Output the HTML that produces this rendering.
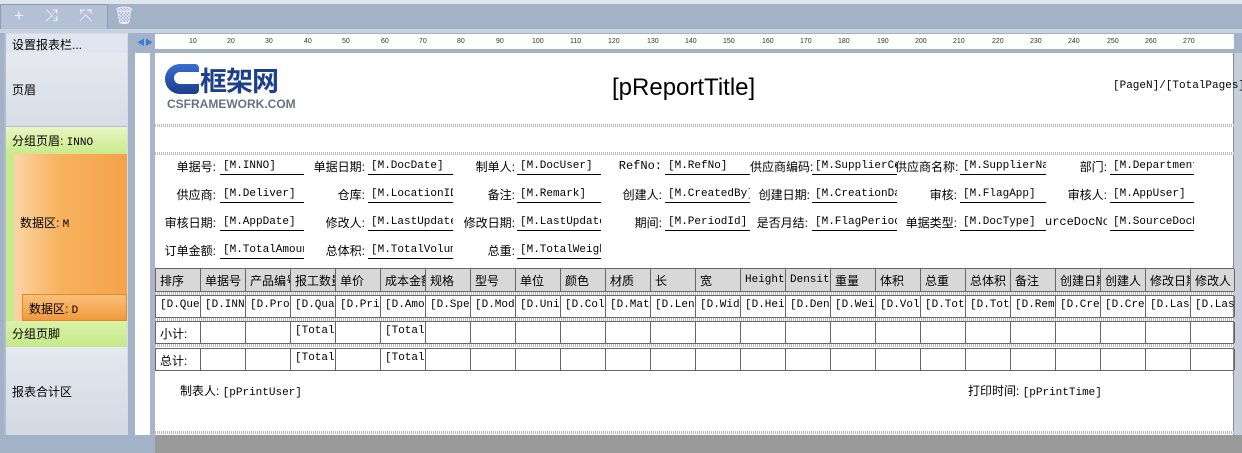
<!DOCTYPE html>
<html><head><meta charset="utf-8"><style>
*{margin:0;padding:0;box-sizing:border-box}
body{width:1242px;height:453px;overflow:hidden;background:#a4b2c8;font-family:"Liberation Sans","Noto Sans CJK SC",sans-serif;font-size:12px;color:#000;position:relative}
.a{position:absolute}
.m{font-family:"Liberation Mono","Noto Sans CJK SC",monospace;font-size:11px}
.lbl{position:absolute;text-align:right;white-space:nowrap;font-size:12px}
.fld{position:absolute;height:20px;border-bottom:1px solid #000;white-space:nowrap;overflow:hidden;font-family:"Liberation Mono","Noto Sans CJK SC",monospace;font-size:11px;padding:5px 0 0 3px}
.cell{position:absolute;border-right:1px solid #666;height:100%;top:0;white-space:nowrap;overflow:hidden;padding:3px 0 0 4px}
.dot{position:absolute;left:155px;width:1079px;height:3px;background:repeating-linear-gradient(90deg,#bbb 0 1px,#fff 1px 2px)}
.lp{position:absolute;left:6px;width:121px;padding-left:6px;font-size:12px}
</style></head><body>
<div class="a" style="left:0;top:0;width:1242px;height:4px;background:#dfe5ee"></div>
<div class="a" style="left:0;top:4px;width:108px;height:25px;background:#b4c0d3;border:1px solid #8e9cb4;border-bottom:none"></div>
<div class="a" style="left:0;top:29px;width:1242px;height:4px;background:#c7d1df"></div>
<div class="a" style="left:14px;top:6px;color:#eef;font-size:17px;letter-spacing:8px">+ ⤨ ⤧ 🗑</div>
<div class="a" style="left:4px;top:33px;width:124px;height:402px;background:#d4dce8;border-left:2px solid #b0bccc"></div>
<div class="lp" style="top:34px;height:19px;background:#dfe6ef;padding-top:2px">设置报表栏...</div>
<div class="lp" style="top:53px;height:74px;background:linear-gradient(#e6e9ef,#d7dce6);border-bottom:1px solid #b6bfcc;padding-top:28px">页眉</div>
<div class="lp" style="top:127px;height:27px;background:linear-gradient(#e8f7c4,#c9ea8a);padding-top:5px">分组页眉: <span class="m">INNO</span></div>
<div class="a" style="left:6px;top:154px;width:121px;height:167px;background:#c9ea8a"></div>
<div class="a" style="left:14px;top:154px;width:113px;height:167px;background:linear-gradient(90deg,#fbd5a6,#f7b25e 40%,#f4a24a);padding:60px 0 0 6px">数据区: <span class="m">M</span></div>
<div class="a" style="left:22px;top:294px;width:105px;height:27px;background:linear-gradient(#f9c07a,#f29a3c);border:1px solid #e08a30;padding:5px 0 0 6px">数据区: <span class="m">D</span></div>
<div class="lp" style="top:321px;height:26px;background:linear-gradient(#d9f2a9,#c7e889);padding-top:4px">分组页脚</div>
<div class="lp" style="top:347px;height:87px;background:linear-gradient(#e4e8ef,#d3d9e3);padding-top:36px">报表合计区</div>
<div class="a" style="left:155px;top:34px;width:1079px;height:15px;background:#fff"></div>
<div class="a" style="left:137px;top:37px;color:#3a7bd5;font-size:8px">◀▶</div>
<div class="a" style="left:135px;top:53px;width:18px;height:382px;background:#fff"></div>
<div class="a" style="left:150px;top:53px;width:5px;height:382px;background:#aab6c8"></div>
<div class="a" style="left:155px;top:53px;width:1079px;height:382px;background:#fff;border-right:1px solid #888"></div>
<div class="a" style="left:155px;top:435px;width:1087px;height:18px;background:#9a9a9a"></div>
<div class="a" style="left:1234px;top:53px;width:8px;height:382px;background:#c5cedb"></div>
<div class="dot" style="top:124px"></div>
<div class="dot" style="top:152px"></div>
<div class="dot" style="top:292px"></div>
<div class="dot" style="top:318px"></div>
<div class="dot" style="top:344px"></div>
<div class="dot" style="top:431px"></div>
<div class="a" style="left:165px;top:64px;width:34px;height:30px;border-radius:15px 4px 4px 15px;background:linear-gradient(#3a6fd0,#1c3d8c)"></div>
<div class="a" style="left:174px;top:72px;width:26px;height:12px;background:#fff;border-radius:6px 0 0 6px"></div>
<div class="a" style="left:200px;top:60px;font-size:27px;font-weight:bold;color:#1e3f8e;font-family:'Noto Sans CJK SC',sans-serif;letter-spacing:-1px">框架网</div>
<div class="a" style="left:167px;top:97px;font-size:12px;color:#6a7180;font-weight:bold">CSFRAMEWORK.COM</div>
<div class="a" style="left:612px;top:74px;font-size:24px">[pReportTitle]</div>
<div class="a m" style="left:1113px;top:80px">[PageN]/[TotalPages]</div>
<div class="lbl" style="left:160px;width:56px;top:158px">单据号:</div><div class="fld" style="left:220px;width:84px;top:155px">[M.INNO]</div>
<div class="lbl" style="left:305px;width:60px;top:158px">单据日期:</div><div class="fld" style="left:368px;width:85px;top:155px">[M.DocDate]</div>
<div class="lbl" style="left:455px;width:60px;top:158px">制单人:</div><div class="fld" style="left:517px;width:84px;top:155px">[M.DocUser]</div>
<div class="lbl m" style="left:600px;width:62px;top:159px">RefNo:</div><div class="fld" style="left:665px;width:85px;top:155px">[M.RefNo]</div>
<div class="lbl" style="left:750px;width:58px;top:158px">供应商编码:</div><div class="fld" style="left:812px;width:85px;top:155px">[M.SupplierCo</div>
<div class="lbl" style="left:895px;width:62px;top:158px">供应商名称:</div><div class="fld" style="left:960px;width:86px;top:155px">[M.SupplierNa</div>
<div class="lbl" style="left:1045px;width:62px;top:158px">部门:</div><div class="fld" style="left:1110px;width:84px;top:155px">[M.Department</div>
<div class="lbl" style="left:160px;width:56px;top:186px">供应商:</div><div class="fld" style="left:220px;width:84px;top:183px">[M.Deliver]</div>
<div class="lbl" style="left:305px;width:60px;top:186px">仓库:</div><div class="fld" style="left:368px;width:85px;top:183px">[M.LocationID</div>
<div class="lbl" style="left:455px;width:60px;top:186px">备注:</div><div class="fld" style="left:517px;width:84px;top:183px">[M.Remark]</div>
<div class="lbl" style="left:600px;width:62px;top:186px">创建人:</div><div class="fld" style="left:665px;width:85px;top:183px">[M.CreatedBy]</div>
<div class="lbl" style="left:750px;width:60px;top:186px">创建日期:</div><div class="fld" style="left:812px;width:85px;top:183px">[M.CreationDa</div>
<div class="lbl" style="left:895px;width:62px;top:186px">审核:</div><div class="fld" style="left:960px;width:86px;top:183px">[M.FlagApp]</div>
<div class="lbl" style="left:1045px;width:62px;top:186px">审核人:</div><div class="fld" style="left:1110px;width:84px;top:183px">[M.AppUser]</div>
<div class="lbl" style="left:160px;width:56px;top:214px">审核日期:</div><div class="fld" style="left:220px;width:84px;top:211px">[M.AppDate]</div>
<div class="lbl" style="left:305px;width:60px;top:214px">修改人:</div><div class="fld" style="left:368px;width:85px;top:211px">[M.LastUpdate</div>
<div class="lbl" style="left:455px;width:60px;top:214px">修改日期:</div><div class="fld" style="left:517px;width:84px;top:211px">[M.LastUpdate</div>
<div class="lbl" style="left:600px;width:62px;top:214px">期间:</div><div class="fld" style="left:665px;width:85px;top:211px">[M.PeriodId]</div>
<div class="lbl" style="left:750px;width:58px;top:214px">是否月结:</div><div class="fld" style="left:812px;width:85px;top:211px">[M.FlagPeriod</div>
<div class="lbl" style="left:895px;width:62px;top:214px">单据类型:</div><div class="fld" style="left:960px;width:86px;top:211px">[M.DocType]</div>
<div class="lbl m" style="left:1045px;width:62px;top:215px;overflow:hidden">urceDocNo:</div><div class="fld" style="left:1110px;width:84px;top:211px">[M.SourceDocN</div>
<div class="lbl" style="left:160px;width:56px;top:242px">订单金额:</div><div class="fld" style="left:220px;width:84px;top:239px">[M.TotalAmoun</div>
<div class="lbl" style="left:305px;width:60px;top:242px">总体积:</div><div class="fld" style="left:368px;width:85px;top:239px">[M.TotalVolum</div>
<div class="lbl" style="left:455px;width:60px;top:242px">总重:</div><div class="fld" style="left:517px;width:84px;top:239px">[M.TotalWeigh</div>
<div class="a" style="left:155px;top:268px;width:1079px;height:24px;background:#d8d8d8;border:1px solid #666;border-right:none">
<div class="cell" style="left:0;width:45px">排序</div><div class="cell" style="left:45px;width:45px">单据号</div><div class="cell" style="left:90px;width:45px">产品编号</div><div class="cell" style="left:135px;width:45px">报工数量</div><div class="cell" style="left:180px;width:45px">单价</div><div class="cell" style="left:225px;width:45px">成本金额</div><div class="cell" style="left:270px;width:45px">规格</div><div class="cell" style="left:315px;width:45px">型号</div><div class="cell" style="left:360px;width:45px">单位</div><div class="cell" style="left:405px;width:45px">颜色</div><div class="cell" style="left:450px;width:45px">材质</div><div class="cell" style="left:495px;width:45px">长</div><div class="cell" style="left:540px;width:45px">宽</div><div class="cell m" style="left:585px;width:45px;padding-top:5px">Height</div><div class="cell m" style="left:630px;width:45px;padding-top:5px">Density</div><div class="cell" style="left:675px;width:45px">重量</div><div class="cell" style="left:720px;width:45px">体积</div><div class="cell" style="left:765px;width:45px">总重</div><div class="cell" style="left:810px;width:45px">总体积</div><div class="cell" style="left:855px;width:45px">备注</div><div class="cell" style="left:900px;width:45px">创建日期</div><div class="cell" style="left:945px;width:45px">创建人</div><div class="cell" style="left:990px;width:45px">修改日期</div><div class="cell" style="left:1035px;width:44px">修改人</div></div>
<div class="a m" style="left:155px;top:295px;width:1079px;height:23px;border:1px solid #666;border-right:none">
<div class="cell" style="left:0;width:45px">[D.Queue</div><div class="cell" style="left:45px;width:45px">[D.INNO</div><div class="cell" style="left:90px;width:45px">[D.Prod</div><div class="cell" style="left:135px;width:45px">[D.Quan</div><div class="cell" style="left:180px;width:45px">[D.Pric</div><div class="cell" style="left:225px;width:45px">[D.Amou</div><div class="cell" style="left:270px;width:45px">[D.Spec</div><div class="cell" style="left:315px;width:45px">[D.Mode</div><div class="cell" style="left:360px;width:45px">[D.Unit</div><div class="cell" style="left:405px;width:45px">[D.Colo</div><div class="cell" style="left:450px;width:45px">[D.Mate</div><div class="cell" style="left:495px;width:45px">[D.Leng</div><div class="cell" style="left:540px;width:45px">[D.Widt</div><div class="cell" style="left:585px;width:45px">[D.Heig</div><div class="cell" style="left:630px;width:45px">[D.Dens</div><div class="cell" style="left:675px;width:45px">[D.Weig</div><div class="cell" style="left:720px;width:45px">[D.Volu</div><div class="cell" style="left:765px;width:45px">[D.Tota</div><div class="cell" style="left:810px;width:45px">[D.Tota</div><div class="cell" style="left:855px;width:45px">[D.Rema</div><div class="cell" style="left:900px;width:45px">[D.Crea</div><div class="cell" style="left:945px;width:45px">[D.Crea</div><div class="cell" style="left:990px;width:45px">[D.Last</div><div class="cell" style="left:1035px;width:44px">[D.Last</div></div>
<div class="a" style="left:155px;top:321px;width:1079px;height:23px;border:1px solid #666;border-right:none">
<div class="cell" style="left:0;width:45px">小计:</div><div class="cell" style="left:45px;width:45px"></div><div class="cell" style="left:90px;width:45px"></div><div class="cell m" style="left:135px;width:45px">[TotalS</div><div class="cell" style="left:180px;width:45px"></div><div class="cell m" style="left:225px;width:45px">[TotalS</div><div class="cell" style="left:270px;width:45px"></div><div class="cell" style="left:315px;width:45px"></div><div class="cell" style="left:360px;width:45px"></div><div class="cell" style="left:405px;width:45px"></div><div class="cell" style="left:450px;width:45px"></div><div class="cell" style="left:495px;width:45px"></div><div class="cell" style="left:540px;width:45px"></div><div class="cell" style="left:585px;width:45px"></div><div class="cell" style="left:630px;width:45px"></div><div class="cell" style="left:675px;width:45px"></div><div class="cell" style="left:720px;width:45px"></div><div class="cell" style="left:765px;width:45px"></div><div class="cell" style="left:810px;width:45px"></div><div class="cell" style="left:855px;width:45px"></div><div class="cell" style="left:900px;width:45px"></div><div class="cell" style="left:945px;width:45px"></div><div class="cell" style="left:990px;width:45px"></div><div class="cell" style="left:1035px;width:44px"></div></div>
<div class="a" style="left:155px;top:348px;width:1079px;height:23px;border:1px solid #666;border-right:none">
<div class="cell" style="left:0;width:45px">总计:</div><div class="cell" style="left:45px;width:45px"></div><div class="cell" style="left:90px;width:45px"></div><div class="cell m" style="left:135px;width:45px">[TotalS</div><div class="cell" style="left:180px;width:45px"></div><div class="cell m" style="left:225px;width:45px">[TotalS</div><div class="cell" style="left:270px;width:45px"></div><div class="cell" style="left:315px;width:45px"></div><div class="cell" style="left:360px;width:45px"></div><div class="cell" style="left:405px;width:45px"></div><div class="cell" style="left:450px;width:45px"></div><div class="cell" style="left:495px;width:45px"></div><div class="cell" style="left:540px;width:45px"></div><div class="cell" style="left:585px;width:45px"></div><div class="cell" style="left:630px;width:45px"></div><div class="cell" style="left:675px;width:45px"></div><div class="cell" style="left:720px;width:45px"></div><div class="cell" style="left:765px;width:45px"></div><div class="cell" style="left:810px;width:45px"></div><div class="cell" style="left:855px;width:45px"></div><div class="cell" style="left:900px;width:45px"></div><div class="cell" style="left:945px;width:45px"></div><div class="cell" style="left:990px;width:45px"></div><div class="cell" style="left:1035px;width:44px"></div></div>
<div class="a" style="left:180px;top:382px">制表人: <span class="m">[pPrintUser]</span></div>
<div class="a" style="left:968px;top:382px">打印时间: <span class="m">[pPrintTime]</span></div>
<div class="a" style="left:155px;top:38px;width:1079px;height:10px;font-size:7px;color:#333;font-family:'Liberation Sans',sans-serif">
<span class="a" style="left:34px">10</span><span class="a" style="left:72px">20</span><span class="a" style="left:110px">30</span><span class="a" style="left:149px">40</span><span class="a" style="left:187px">50</span><span class="a" style="left:226px">60</span><span class="a" style="left:264px">70</span><span class="a" style="left:302px">80</span><span class="a" style="left:341px">90</span><span class="a" style="left:377px">100</span><span class="a" style="left:415px">110</span><span class="a" style="left:453px">120</span><span class="a" style="left:492px">130</span><span class="a" style="left:530px">140</span><span class="a" style="left:568px">150</span><span class="a" style="left:607px">160</span><span class="a" style="left:645px">170</span><span class="a" style="left:683px">180</span><span class="a" style="left:722px">190</span><span class="a" style="left:760px">200</span><span class="a" style="left:798px">210</span><span class="a" style="left:837px">220</span><span class="a" style="left:875px">230</span><span class="a" style="left:913px">240</span><span class="a" style="left:952px">250</span><span class="a" style="left:990px">260</span><span class="a" style="left:1028px">270</span></div>
</body></html>
